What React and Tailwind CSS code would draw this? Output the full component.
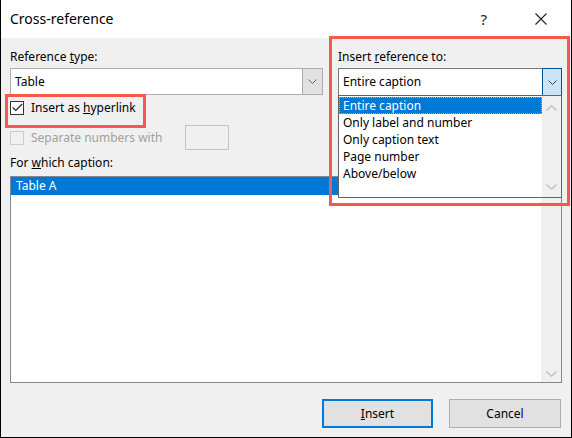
import React from "react";

function Chevron({ color = "#606060" }) {
  return (
    <svg width="9" height="5" viewBox="0 0 9 5">
      <path d="M0.5 0.5 L4.5 4.5 L8.5 0.5" fill="none" stroke={color} strokeWidth="1" />
    </svg>
  );
}

function ChevronUp({ color = "#c8c8c8" }) {
  return (
    <svg width="11" height="6" viewBox="0 0 11 6">
      <path d="M0.5 5.5 L5.5 0.8 L10.5 5.5" fill="none" stroke={color} strokeWidth="1.6" />
    </svg>
  );
}

function ChevronDown({ color = "#c8c8c8" }) {
  return (
    <svg width="11" height="6" viewBox="0 0 11 6">
      <path d="M0.5 0.5 L5.5 5.2 L10.5 0.5" fill="none" stroke={color} strokeWidth="1.6" />
    </svg>
  );
}

export default function App() {
  const font = { fontFamily: '"Noto Sans", "Open Sans", sans-serif' };
  const items = ["Entire caption", "Only label and number", "Only caption text", "Page number", "Above/below"];

  return (
    <div
      className="relative w-[572px] h-[438px] bg-[#f0f0f0] border-x border-b border-black flex flex-col text-black text-[12px] overflow-hidden"
      style={font}
    >
      {/* Title bar */}
      <div className="h-[38px] bg-white flex items-center pl-[9px]">
        <span className="text-[14px] leading-none">Cross-reference</span>
        <span className="ml-auto mr-[48px] text-[15px] leading-none text-[#222]">?</span>
        <svg width="12" height="12" viewBox="0 0 12 12" className="mr-[24px]">
          <path d="M0.5 0.5 L11.5 11.5 M11.5 0.5 L0.5 11.5" stroke="#222" strokeWidth="1.1" />
        </svg>
      </div>

      {/* Body */}
      <div className="flex flex-col px-[9px] pt-[10px]">
        <div className="flex">
          {/* Left column */}
          <div className="w-[313px] flex flex-col">
            <div className="h-[18px] leading-[18px]">
              Reference <span className="underline">t</span>ype:
            </div>
            <div className="mt-[2px] h-[27px] flex bg-white border border-[#adadad]">
              <div className="flex-1 flex items-center pl-[4px]">Table</div>
              <div className="w-[20px] bg-[#e1e1e1] border-l border-[#adadad] flex items-center justify-center">
                <Chevron />
              </div>
            </div>
            <div className="mt-[5px] h-[15px] flex items-center">
              <div className="w-[14px] h-[14px] border border-[#333] bg-white flex items-center justify-center">
                <svg width="11" height="9" viewBox="0 0 11 9">
                  <path d="M0.8 4.5 L3.8 7.5 L10.2 1" fill="none" stroke="#222" strokeWidth="1.2" />
                </svg>
              </div>
              <span className="ml-[7px]">
                Insert as <span className="underline">h</span>yperlink
              </span>
            </div>
            <div className="mt-[10px] h-[25px] flex items-center">
              <div className="w-[14px] h-[14px] border border-[#cccccc] bg-[#f0f0f0]" />
              <span className="ml-[7px] text-[#a0a0a0]">Separate numbers with</span>
              <div className="ml-[23px] w-[44px] h-[25px] border border-[#c4c4c4] bg-[#f0f0f0]" />
            </div>
          </div>

          {/* Right column */}
          <div className="ml-[15px] w-[224px] flex flex-col">
            <div className="h-[18px] leading-[18px]">
              Insert <span className="underline">r</span>eference to:
            </div>
            <div className="mt-[2px] h-[28px] flex bg-white border border-[#7a7a7a]">
              <div className="flex-1 flex items-center pl-[4px]">Entire caption</div>
              <div className="w-[20px] -my-px -mr-px bg-[#cce4f7] border border-[#005499] flex items-center justify-center">
                <Chevron color="#404040" />
              </div>
            </div>
          </div>
        </div>

        <div className="mt-[4px] h-[18px] leading-[18px]">
          For <span className="underline">w</span>hich caption:
        </div>
        <div className="mt-[4px] h-[207px] w-[552px] bg-white border border-[#828790] flex">
          <div className="flex-1">
            <div className="h-[18px] bg-[#0078d7] text-white flex items-center pl-[5px]">Table A</div>
          </div>
          <div className="w-[20px] bg-[#f0f0f0] flex flex-col items-center justify-end pb-[5px]">
            <ChevronDown />
          </div>
        </div>

        <div className="mt-[16px] flex justify-end gap-[16px] pr-[1px]">
          <button className="w-[111px] h-[29px] bg-[#e1e1e1] border-2 border-[#0078d7] text-[12px]">
            <span className="underline">I</span>nsert
          </button>
          <button className="w-[112px] h-[29px] bg-[#e1e1e1] border border-[#adadad] text-[12px]">Cancel</button>
        </div>
      </div>

      {/* Open dropdown list */}
      <div className="absolute left-[337px] top-[95px] w-[224px] h-[103px] bg-white border border-[#646464] flex">
        <div className="flex-1 flex flex-col pt-[1px]">
          {items.map((t, i) => (
            <div
              key={t}
              className={
                i === 0
                  ? "h-[17px] flex items-center pl-[3px] bg-[#0078d7] text-white border border-dotted border-[#f0a040]"
                  : "h-[17px] flex items-center pl-[4px]"
              }
            >
              {t}
            </div>
          ))}
        </div>
        <div className="w-[19px] bg-[#f0f0f0] flex flex-col items-center justify-between pt-[9px] pb-[7px]">
          <ChevronUp />
          <ChevronDown />
        </div>
      </div>

      {/* Highlight annotations */}
      <div className="absolute left-[4px] top-[94px] w-[141px] h-[34px] border-[3px] border-[#f4594c]" />
      <div className="absolute left-[328px] top-[36px] w-[241px] h-[170px] border-[3px] border-[#f4594c]" />
    </div>
  );
}
